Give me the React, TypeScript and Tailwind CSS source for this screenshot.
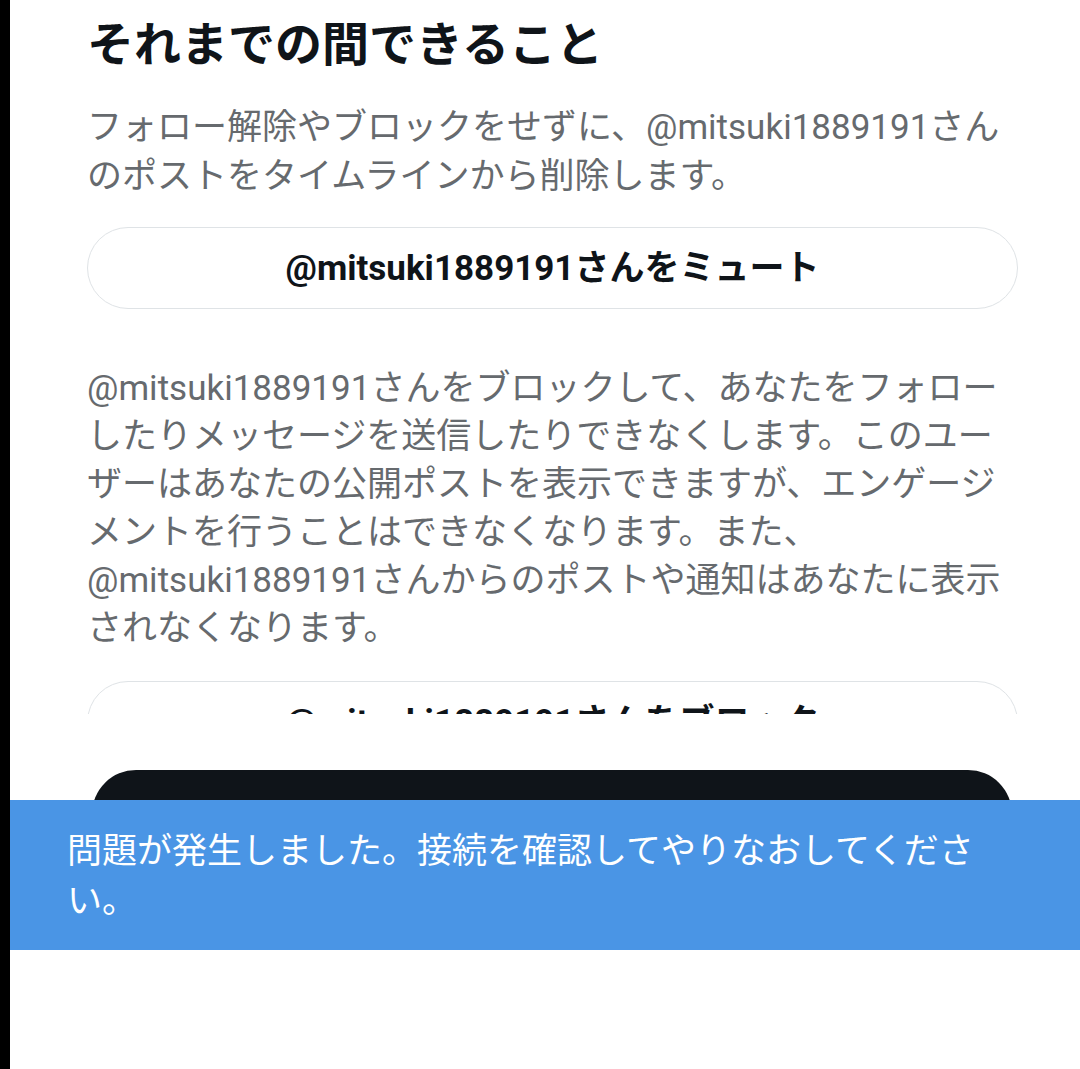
import React from 'react';

const font = "font-['Roboto','Noto_Sans_CJK_JP',sans-serif]";

const OutlineButton: React.FC<{ label: string }> = ({ label }) => (
  <div className="flex h-[82px] items-center justify-center rounded-full border-[1.5px] border-[#dfe3e6] bg-white">
    <span className="text-[35px] font-bold leading-none text-[#0f1419]">{label}</span>
  </div>
);

const App: React.FC = () => {
  return (
    <div className={`flex h-[1069px] w-[1080px] overflow-hidden bg-white ${font}`}>
      {/* left edge */}
      <div className="w-[10px] shrink-0 bg-black" />

      <div className="flex flex-1 flex-col">
        {/* Scrollable sheet content */}
        <div className="h-[714px] shrink-0 overflow-hidden pl-[77px] pr-[62px]">
          <h2 className="pt-[17px] text-[47px] font-bold leading-[56px] text-[#0f1419]">
            それまでの間できること
          </h2>
          <p className="mt-[30px] text-[35px] leading-[49px] text-[#666a6e]">
            フォロー解除やブロックをせずに、@mitsuki1889191さんのポストをタイムラインから削除します。
          </p>
          <div className="mt-[26px]">
            <OutlineButton label="@mitsuki1889191さんをミュート" />
          </div>
          <p className="mt-[56px] text-[35px] leading-[48px] text-[#666a6e]">
            @mitsuki1889191さんをブロックして、あなたをフォローしたりメッセージを送信したりできなくします。このユーザーはあなたの公開ポストを表示できますが、エンゲージメントを行うことはできなくなります。また、@mitsuki1889191さんからのポストや通知はあなたに表示されなくなります。
          </p>
          <div className="mt-[28px]">
            <OutlineButton label="@mitsuki1889191さんをブロック" />
          </div>
        </div>

        {/* Footer action, partly covered */}
        <div className="h-[86px] shrink-0 overflow-hidden pl-[82px] pr-[68px]">
          <div className="mt-[56px] h-[88px] rounded-full bg-[#0f1419]" />
        </div>

        {/* Snackbar */}
        <div className="h-[150px] shrink-0 bg-[#4a95e5] pl-[57px] pr-[90px] pt-[27px]">
          <p className="text-[35px] leading-[50px] text-white">
            問題が発生しました。接続を確認してやりなおしてください。
          </p>
        </div>

        <div className="flex-1 bg-white" />
      </div>
    </div>
  );
};

export default App;
